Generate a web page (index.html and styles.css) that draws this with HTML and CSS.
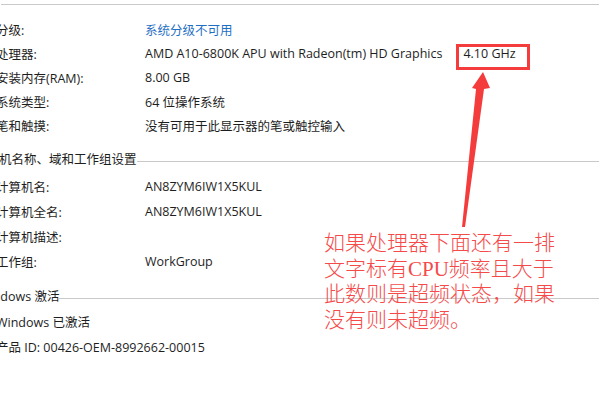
FILE: index.html
```html
<!DOCTYPE html>
<html lang="zh-CN">
<head>
<meta charset="utf-8">
<link rel="stylesheet" href="styles.css">
</head>
<body>
<div class="page">
  <div class="topline"></div>
  <div class="group g1">
    <div class="row"><span class="label">分级:</span><span class="value link">系统分级不可用</span></div>
    <div class="row"><span class="label">处理器:</span><span class="value">AMD A10-6800K APU with Radeon(tm) HD Graphics<span class="freq">4.10 GHz</span></span></div>
    <div class="row"><span class="label">安装内存(RAM):</span><span class="value">8.00 GB</span></div>
    <div class="row"><span class="label">系统类型:</span><span class="value">64 位操作系统</span></div>
    <div class="row"><span class="label">笔和触摸:</span><span class="value">没有可用于此显示器的笔或触控输入</span></div>
  </div>
  <div class="heading h1"><span>计算机名称、域和工作组设置</span></div>
  <div class="group g2">
    <div class="row"><span class="label">计算机名:</span><span class="value">AN8ZYM6IW1X5KUL</span></div>
    <div class="row"><span class="label">计算机全名:</span><span class="value">AN8ZYM6IW1X5KUL</span></div>
    <div class="row"><span class="label">计算机描述:</span><span class="value"></span></div>
    <div class="row"><span class="label">工作组:</span><span class="value">WorkGroup</span></div>
  </div>
  <div class="heading h2"><span>Windows 激活</span></div>
  <div class="group g3">
    <div class="row"><span class="plain">Windows 已激活</span></div>
    <div class="row"><span class="plain">产品 ID: 00426-OEM-8992662-00015</span></div>
  </div>

  <div class="hl-box"></div>
  <svg class="arrow" width="599" height="400" viewBox="0 0 599 400">
    <polygon points="483,68 490,84 484,85 465,223 462,223 476,85 472,84" fill="#f43c3c"/>
  </svg>
  <div class="note">
    <div class="note-line">如果处理器下面还有一排</div>
    <div class="note-line">文字标有CPU频率且大于</div>
    <div class="note-line">此数则是超频状态，如果</div>
    <div class="note-line">没有则未超频。</div>
  </div>
</div>
</body>
</html>
```
FILE: styles.css
```css
html, body {
  margin: 0;
  padding: 0;
  background: #ffffff;
}
body {
  width: 599px;
  height: 400px;
  overflow: hidden;
  font-family: "Open Sans", "Noto Sans CJK SC", sans-serif;
  font-size: 12.5px;
  color: #1e1e1e;
}
.page {
  position: relative;
  width: 599px;
  height: 400px;
}
.topline {
  margin-top: 4px;
  margin-left: 1px;
  height: 0;
  border-top: 1px solid #c9c9c9;
}
.group {
  margin-left: -4px;
  display: flex;
  flex-direction: column;
}
.g1 { margin-top: 12px; }
.g1 .row { height: 24px; }
.g2 { margin-top: 6px; }
.g2 .row, .g3 .row { height: 25px; }
.g3 { margin-top: 4px; }
.row {
  display: flex;
  align-items: center;
  white-space: nowrap;
}
.label {
  width: 149px;
  flex: none;
}
.value { flex: none; }
.link { color: #1f6fc5; }
.freq { margin-left: 21px; }
.heading {
  margin-left: -26px;
  height: 20px;
  display: flex;
  align-items: center;
  white-space: nowrap;
}
.heading::after {
  content: "";
  flex: 1;
  height: 1px;
  margin-top: 6px;
  background: #c9c9c9;
}
.h1 { margin-top: 11px; }
.h2 { margin-top: 11px; margin-left: -22px; }
.hl-box {
  position: absolute;
  left: 456px;
  top: 40px;
  width: 68px;
  height: 20px;
  border: 3px solid #f43c3c;
}
.arrow {
  position: absolute;
  left: 0;
  top: 0;
}
.note {
  position: absolute;
  left: 324px;
  top: 227px;
  font-family: "Liberation Serif", "Noto Sans CJK SC", serif;
  font-weight: 200;
  font-size: 21px;
  color: #f54a4a;
  white-space: nowrap;
}
.note-line {
  height: 25.6px;
  line-height: 25.6px;
  overflow: visible;
}
```
